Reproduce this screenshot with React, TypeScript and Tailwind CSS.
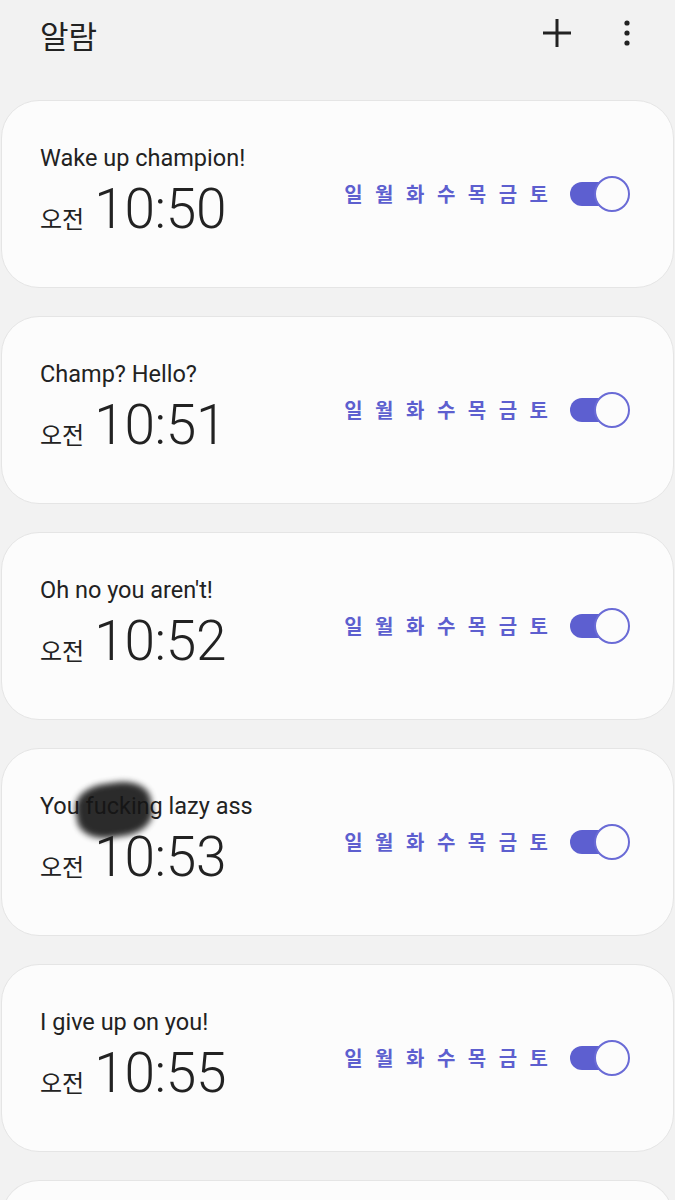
import React from 'react';

const DAYS = ['일', '월', '화', '수', '목', '금', '토'];

const alarms = [
  { label: 'Wake up champion!', time: '10:50' },
  { label: 'Champ? Hello?', time: '10:51' },
  { label: "Oh no you aren't!", time: '10:52' },
  { label: 'You fucking lazy ass', time: '10:53', redacted: true },
  { label: 'I give up on you!', time: '10:55' },
];

const fontStack = { fontFamily: 'Roboto, "Noto Sans CJK KR", sans-serif' };

function Toggle() {
  return (
    <div className="relative w-[60px] h-[36px] flex items-center">
      <div className="absolute left-0 w-[50px] h-[24px] rounded-full bg-[#5d5fd0]" />
      <div className="absolute right-0 w-[36px] h-[36px] rounded-full bg-[#fcfcfc] border-2 border-[#6a6bd6]" />
    </div>
  );
}

function AlarmCard({ label, time, redacted }: { label: string; time: string; redacted?: boolean }) {
  return (
    <div className="mx-[1px] h-[188px] rounded-[38px] bg-[#fcfcfc] border border-[#e5e5e5] flex items-start justify-between pl-[38px] pr-[43px]">
      <div className="pt-[42px]">
        <div className="relative text-[23.5px] leading-[30px] text-[#222]">
          {label}
          {redacted && (
            <div className="absolute left-[36px] top-[-8px] w-[76px] h-[54px] rounded-[40%] bg-[#151515] opacity-90 blur-[3px] rotate-[-8deg]" />
          )}
        </div>
        <div className="mt-[6px] flex items-baseline gap-[10px] text-[#222]">
          <span className="text-[24px] leading-none" style={{ fontFamily: '"Noto Sans CJK KR", sans-serif' }}>
            오전
          </span>
          <span className="text-[55px] leading-[60px] font-light tracking-[-0.3px]">{time}</span>
        </div>
      </div>
      <div className="pt-[75px] flex items-center gap-[22px]">
        <div
          className="flex gap-[12.5px] text-[20px] font-bold text-[#5d5fcf]"
          style={{ fontFamily: '"Noto Sans CJK KR", sans-serif' }}
        >
          {DAYS.map((d) => (
            <span key={d}>{d}</span>
          ))}
        </div>
        <Toggle />
      </div>
    </div>
  );
}

export default function App() {
  return (
    <div className="w-[675px] min-h-[1200px] bg-[#f2f2f2]" style={fontStack}>
      <div className="h-[100px] flex items-start justify-between pl-[40px] pr-[44px] pt-[12px]">
        <h1
          className="text-[31px] leading-[46px] text-[#222]"
          style={{ fontFamily: '"Noto Sans CJK KR", sans-serif' }}
        >
          알람
        </h1>
        <div className="flex items-center gap-[51px] pt-[6px]">
          <svg width="30" height="30" viewBox="0 0 30 30">
            <path d="M15 1v28M1 15h28" stroke="#222" strokeWidth="3" />
          </svg>
          <svg width="8" height="30" viewBox="0 0 8 30">
            <circle cx="4" cy="5" r="2.6" fill="#222" />
            <circle cx="4" cy="15" r="2.6" fill="#222" />
            <circle cx="4" cy="25" r="2.6" fill="#222" />
          </svg>
        </div>
      </div>
      <div className="flex flex-col gap-[28px]">
        {alarms.map((a) => (
          <AlarmCard key={a.time} {...a} />
        ))}
        <div className="mx-[1px] h-[60px] rounded-t-[38px] bg-[#fcfcfc] border border-b-0 border-[#e5e5e5]" />
      </div>
    </div>
  );
}
